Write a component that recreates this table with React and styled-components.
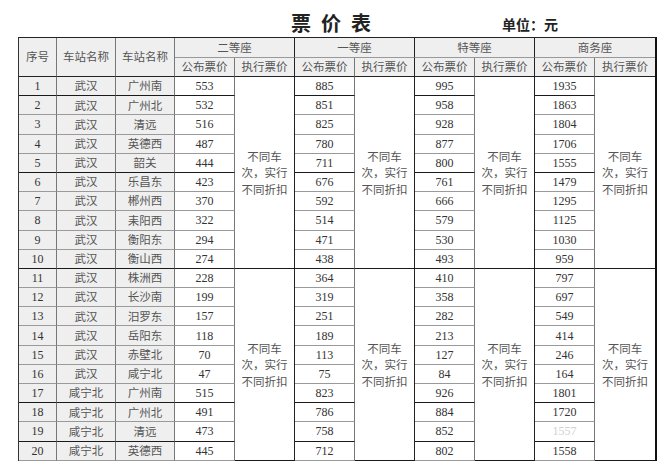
import React from "react";
import styled, { createGlobalStyle } from "styled-components";

const Global = createGlobalStyle`
  html, body { margin: 0; padding: 0; background: #ffffff; }
  body { font-family: "Noto Sans CJK SC", "Noto Sans", sans-serif; color: #444; }
`;

const Page = styled.div`
  width: 670px;
  height: 462px;
  overflow: hidden;
`;

const TitleBar = styled.div`
  display: flex;
  align-items: flex-start;
  box-sizing: border-box;
  height: 37px;
  padding-top: 13px;
  margin-left: 18px;
  width: 638px;
`;

const Title = styled.h1`
  margin: 0 0 0 273px;
  font-size: 20px;
  line-height: 20px;
  font-weight: 700;
  letter-spacing: 10px;
  color: #222;
  font-family: "Noto Sans CJK SC", sans-serif;
`;

const Unit = styled.div`
  margin-left: 121px;
  padding-top: 4px;
  font-size: 14px;
  line-height: 14px;
  font-weight: 700;
  color: #222;
`;

const Sheet = styled.div`
  display: grid;
  grid-template-columns: 38px 59px 59px repeat(8, 60px);
  grid-template-rows: 19.5px 19.5px repeat(20, 19.2px);
  width: max-content;
  margin-left: 18px;
  border-top: 1px solid #222;
  border-left: 1px solid #333;
  border-right: 2px solid #111;
`;

const base = `
  box-sizing: border-box;
  display: flex;
  align-items: center;
  justify-content: center;
  text-align: center;
  white-space: nowrap;
  line-height: 1;
`;

const HeadCell = styled.div`
  ${base}
  grid-row: span ${(p) => p.$rows || 1};
  grid-column: span ${(p) => p.$cols || 1};
  font-size: 11.5px;
  color: #555;
  background: #efefef;
  border-right: ${(p) => (p.$last ? "none" : `1px solid ${p.$strong ? "#222" : "#777"}`)};
  border-bottom: 1px solid ${(p) => (p.$dark ? "#222" : "#999")};
`;

const Cell = styled.div`
  ${base}
  background: ${(p) => (p.$shade ? "#efefef" : "#ffffff")};
  border-right: 1px solid #777;
  border-bottom: 1px solid ${(p) => (p.$dark ? "#1a1a1a" : "#9a9a9a")};
  font-family: ${(p) =>
    p.$num ? '"Liberation Serif", serif' : '"Noto Sans CJK SC", sans-serif'};
  font-size: ${(p) => (p.$num ? "12px" : "11.5px")};
  color: ${(p) => (p.$faded ? "#d0d0d0" : p.$num ? "#333" : "#555")};
`;

const NoteCell = styled.div`
  ${base}
  white-space: normal;
  grid-row: span 10;
  background: #ffffff;
  border-right: ${(p) => (p.$last ? "none" : "1px solid #222")};
  border-bottom: 1px solid #1a1a1a;
  font-size: 11.5px;
  line-height: 16.5px;
  color: #555;
`;

const rows = [
  ["武汉", "广州南", 553, 885, 995, 1935],
  ["武汉", "广州北", 532, 851, 958, 1863],
  ["武汉", "清远", 516, 825, 928, 1804],
  ["武汉", "英德西", 487, 780, 877, 1706],
  ["武汉", "韶关", 444, 711, 800, 1555],
  ["武汉", "乐昌东", 423, 676, 761, 1479],
  ["武汉", "郴州西", 370, 592, 666, 1295],
  ["武汉", "耒阳西", 322, 514, 579, 1125],
  ["武汉", "衡阳东", 294, 471, 530, 1030],
  ["武汉", "衡山西", 274, 438, 493, 959],
  ["武汉", "株洲西", 228, 364, 410, 797],
  ["武汉", "长沙南", 199, 319, 358, 697],
  ["武汉", "汨罗东", 157, 251, 282, 549],
  ["武汉", "岳阳东", 118, 189, 213, 414],
  ["武汉", "赤壁北", 70, 113, 127, 246],
  ["武汉", "咸宁北", 47, 75, 84, 164],
  ["咸宁北", "广州南", 515, 823, 926, 1801],
  ["咸宁北", "广州北", 491, 786, 884, 1720],
  ["咸宁北", "清远", 473, 758, 852, 1557],
  ["咸宁北", "英德西", 445, 712, 802, 1558],
];

const darkBottom = new Set([1, 5, 10, 17, 19]);

const classes = ["二等座", "一等座", "特等座", "商务座"];

export default function App() {
  return (
    <Page>
      <Global />
      <TitleBar>
        <Title>票价表</Title>
        <Unit>单位：元</Unit>
      </TitleBar>
      <Sheet role="table">
        <HeadCell $rows={2} $dark>序号</HeadCell>
        <HeadCell $rows={2} $dark>车站名称</HeadCell>
        <HeadCell $rows={2} $dark>车站名称</HeadCell>
        {classes.map((c, i) => (
          <HeadCell key={c} $cols={2} $strong $last={i === 3}>
            {c}
          </HeadCell>
        ))}
        {classes.map((c, i) => (
          <React.Fragment key={c}>
            <HeadCell $dark>公布票价</HeadCell>
            <HeadCell $dark $strong $last={i === 3}>执行票价</HeadCell>
          </React.Fragment>
        ))}
        {rows.map((r, i) => {
          const n = i + 1;
          const dark = darkBottom.has(n);
          const first = n === 1 || n === 11;
          return (
            <React.Fragment key={n}>
              <Cell $shade $num $dark={dark}>{n}</Cell>
              <Cell $shade $dark={dark}>{r[0]}</Cell>
              <Cell $shade $dark={dark}>{r[1]}</Cell>
              {[r[2], r[3], r[4], r[5]].map((v, k) => (
                <React.Fragment key={k}>
                  <Cell $num $dark={dark} $faded={n === 19 && k === 3}>
                    {v}
                  </Cell>
                  {first && (
                    <NoteCell $last={k === 3}>
                      不同车
                      <br />
                      次，实行
                      <br />
                      不同折扣
                    </NoteCell>
                  )}
                </React.Fragment>
              ))}
            </React.Fragment>
          );
        })}
      </Sheet>
    </Page>
  );
}
